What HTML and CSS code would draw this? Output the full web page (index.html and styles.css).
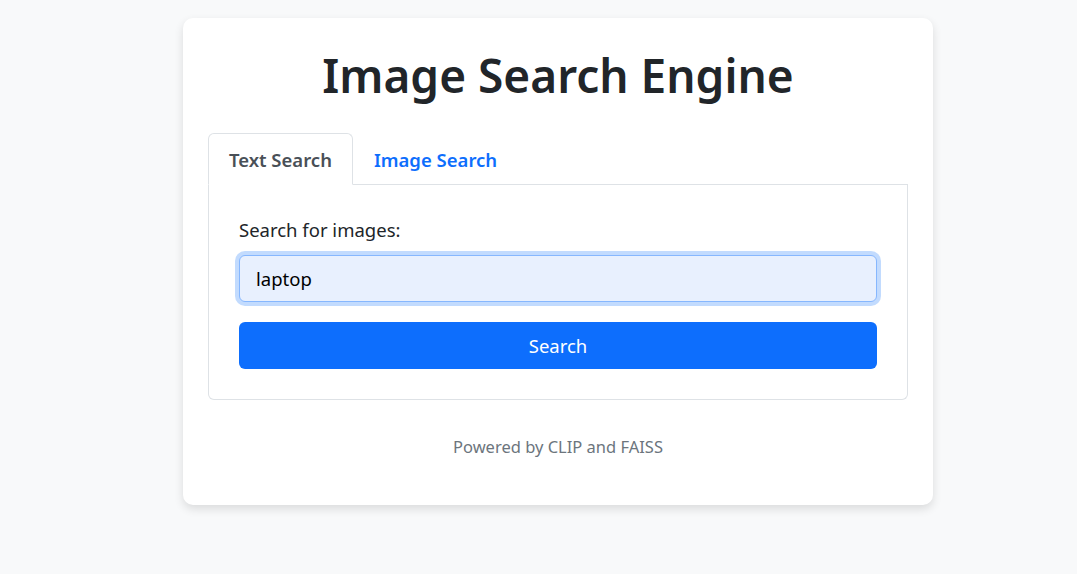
FILE: index.html
```html
<!DOCTYPE html>
<html lang="en">
<head>
<meta charset="utf-8">
<title>Image Search Engine</title>
<link rel="stylesheet" href="styles.css">
</head>
<body>
<div class="page">
  <div class="card">
    <h1 class="title">Image Search Engine</h1>
    <ul class="tabs">
      <li class="tab active">Text Search</li>
      <li class="tab">Image Search</li>
    </ul>
    <div class="tab-content">
      <label class="label" for="q">Search for images:</label>
      <div class="input-wrap">
        <input id="q" class="input" type="text" value="laptop">
      </div>
      <button class="btn">Search</button>
    </div>
    <p class="footer">Powered by CLIP and FAISS</p>
  </div>
</div>
</body>
</html>
```
FILE: styles.css
```css
* { box-sizing: border-box; }
html, body { margin: 0; padding: 0; }
body {
  background: #f8f9fa;
  font-family: "Noto Sans", "Open Sans", sans-serif;
  color: #212529;
  height: 574px;
  overflow: hidden;
}
.page {
  padding: 18px 0 0 39px;
  display: flex;
  justify-content: center;
}
.card {
  width: 750px;
  background: #fff;
  border-radius: 10px;
  box-shadow: 0 4px 10px rgba(0,0,0,0.12);
  padding: 25px 25px 30px;
}
.title {
  margin: 0 0 26px;
  text-align: center;
  font-size: 46px;
  font-weight: 600;
  line-height: 64px;
}
.tabs {
  list-style: none;
  margin: 0;
  padding: 0;
  display: flex;
  border-bottom: 1px solid #dee2e6;
}
.tab {
  padding: 0 20px;
  height: 52px;
  display: flex;
  align-items: center;
  font-size: 18.5px;
  font-weight: 600;
  color: #0d6efd;
  border: 1px solid transparent;
  border-top-left-radius: 6px;
  border-top-right-radius: 6px;
  margin-bottom: -1px;
}
.tab.active {
  color: #495057;
  background: #fff;
  border-color: #dee2e6 #dee2e6 #fff;
}
.tab-content {
  border: 1px solid #dee2e6;
  border-top: none;
  border-radius: 0 0 6px 6px;
  padding: 32px 30px 30px;
}
.label {
  display: block;
  font-size: 18.5px;
  line-height: 26px;
  margin-bottom: 12px;
}
.input-wrap { margin-bottom: 20px; }
.input {
  display: block;
  width: 100%;
  height: 47px;
  padding: 0 16px;
  font-family: inherit;
  font-size: 18.5px;
  color: #000;
  background: #e8f0fe;
  border: 1px solid #86b7fe;
  border-radius: 6px;
  outline: none;
  box-shadow: 0 0 0 4px rgba(13,110,253,0.25);
}
.btn {
  display: block;
  width: 100%;
  height: 47px;
  background: #0d6efd;
  border: none;
  border-radius: 6px;
  color: #fff;
  font-family: inherit;
  font-size: 18.5px;
}
.footer {
  margin: 35px 0 17px;
  text-align: center;
  color: #6c757d;
  font-size: 16.5px;
}
```
